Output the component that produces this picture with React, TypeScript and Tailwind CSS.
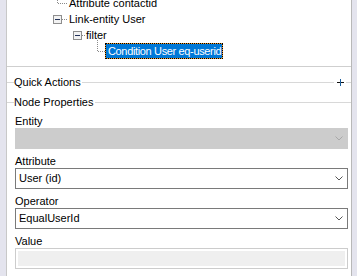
import React from 'react';

function Expander() {
  return (
    <svg width="9" height="9" viewBox="0 0 9 9" shapeRendering="crispEdges">
      <rect x="0.5" y="0.5" width="8" height="8" fill="#f2f2f2" stroke="#8e8e8e" />
      <line x1="2" y1="4.5" x2="7" y2="4.5" stroke="#22325a" />
    </svg>
  );
}

function Chevron({ color }: { color: string }) {
  return (
    <svg width="8" height="5" viewBox="0 0 8 5">
      <polyline points="0.5,0.5 4,4 7.5,0.5" fill="none" stroke={color} strokeWidth="1" />
    </svg>
  );
}

function GroupHeader({ title, action }: { title: string; action?: boolean }) {
  return (
    <div className="flex items-center h-[13px]">
      <div className="w-[7px] h-px bg-[#d8d8d8]" />
      <span className="pr-px whitespace-nowrap">{title}</span>
      <div className="flex-1 h-px bg-[#d8d8d8]" />
      {action && (
        <>
          <div className="w-[12px] flex justify-center">
            <svg width="7" height="7" viewBox="0 0 7 7" shapeRendering="crispEdges">
              <line x1="0" y1="3.5" x2="7" y2="3.5" stroke="#111" />
              <line x1="3.5" y1="0" x2="3.5" y2="7" stroke="#1a5fa0" />
            </svg>
          </div>
          <div className="w-[5px] h-px bg-[#d8d8d8]" />
        </>
      )}
    </div>
  );
}

function Field({ label, children }: { label: string; children: React.ReactNode }) {
  return (
    <div className="flex flex-col mb-[6px]">
      <span className="h-[13px]">{label}</span>
      {children}
    </div>
  );
}

export default function App() {
  return (
    <div className="w-[357px] h-[276px] flex bg-[#e4e4ee] overflow-hidden text-[11px] leading-[13px] text-black font-['Liberation_Sans',Arial,sans-serif]">
      <div className="w-[6px]" />
      <div className="w-[346px] bg-white border-l border-r border-l-[#c8c8c8] border-r-[#b8b8b8] flex flex-col">
        {/* tree */}
        <div className="relative h-[67px] border-b border-[#cfcfcf] overflow-hidden">
          <svg className="absolute inset-0" width="344" height="66" shapeRendering="crispEdges">
            <g stroke="#8a8a8a" strokeDasharray="1 1" fill="none">
              <line x1="50.5" y1="0" x2="50.5" y2="4" />
              <line x1="51" y1="3.5" x2="61" y2="3.5" />
              <line x1="55" y1="19.5" x2="61" y2="19.5" />
              <line x1="75" y1="35.5" x2="79" y2="35.5" />
              <line x1="90.5" y1="40" x2="90.5" y2="52" />
              <line x1="91" y1="51.5" x2="98" y2="51.5" />
            </g>
          </svg>
          <div className="absolute left-[46px] top-[15px]"><Expander /></div>
          <div className="absolute left-[66px] top-[31px]"><Expander /></div>
          <div className="flex flex-col -mt-[5px]">
            <div className="h-[16px] flex items-center pl-[62px]">Attribute contactid</div>
            <div className="h-[16px] flex items-center pl-[62px]">Link-entity User</div>
            <div className="h-[16px] flex items-center pl-[79px]">filter</div>
            <div className="h-[16px] flex items-center pl-[98px]">
              <div className="h-[16px] w-[118px] border border-dotted border-black bg-[#f09a2a]">
                <div className="h-full bg-[#0078d7] text-white flex items-center pl-[2px] whitespace-nowrap tracking-[-0.35px]">
                  Condition User eq-userid
                </div>
              </div>
            </div>
          </div>
        </div>

        <div className="mt-[9px]">
          <GroupHeader title="Quick Actions" action />
        </div>
        <div className="mt-[7px]">
          <GroupHeader title="Node Properties" />
        </div>

        <div className="mt-[6px] pl-[8px] flex flex-col">
          <Field label="Entity">
            <div className="w-[333px] h-[21px] bg-[#cccccc] border border-[#cccccc] flex items-center justify-end pr-[4px]">
              <Chevron color="#a8a8a8" />
            </div>
          </Field>
          <Field label="Attribute">
            <div className="w-[333px] h-[21px] bg-white border border-[#7a7a7a] flex items-center justify-between pl-[3px] pr-[4px]">
              <span>User (id)</span>
              <Chevron color="#555555" />
            </div>
          </Field>
          <Field label="Operator">
            <div className="w-[333px] h-[21px] bg-white border border-[#7a7a7a] flex items-center justify-between pl-[3px] pr-[4px]">
              <span>EqualUserId</span>
              <Chevron color="#555555" />
            </div>
          </Field>
          <Field label="Value">
            <div className="w-[333px] h-[21px] bg-white border border-[#cccccc] p-[2px]">
              <div className="w-full h-full bg-[#efefef]" />
            </div>
          </Field>
        </div>
      </div>
      <div className="w-[5px]" />
    </div>
  );
}
